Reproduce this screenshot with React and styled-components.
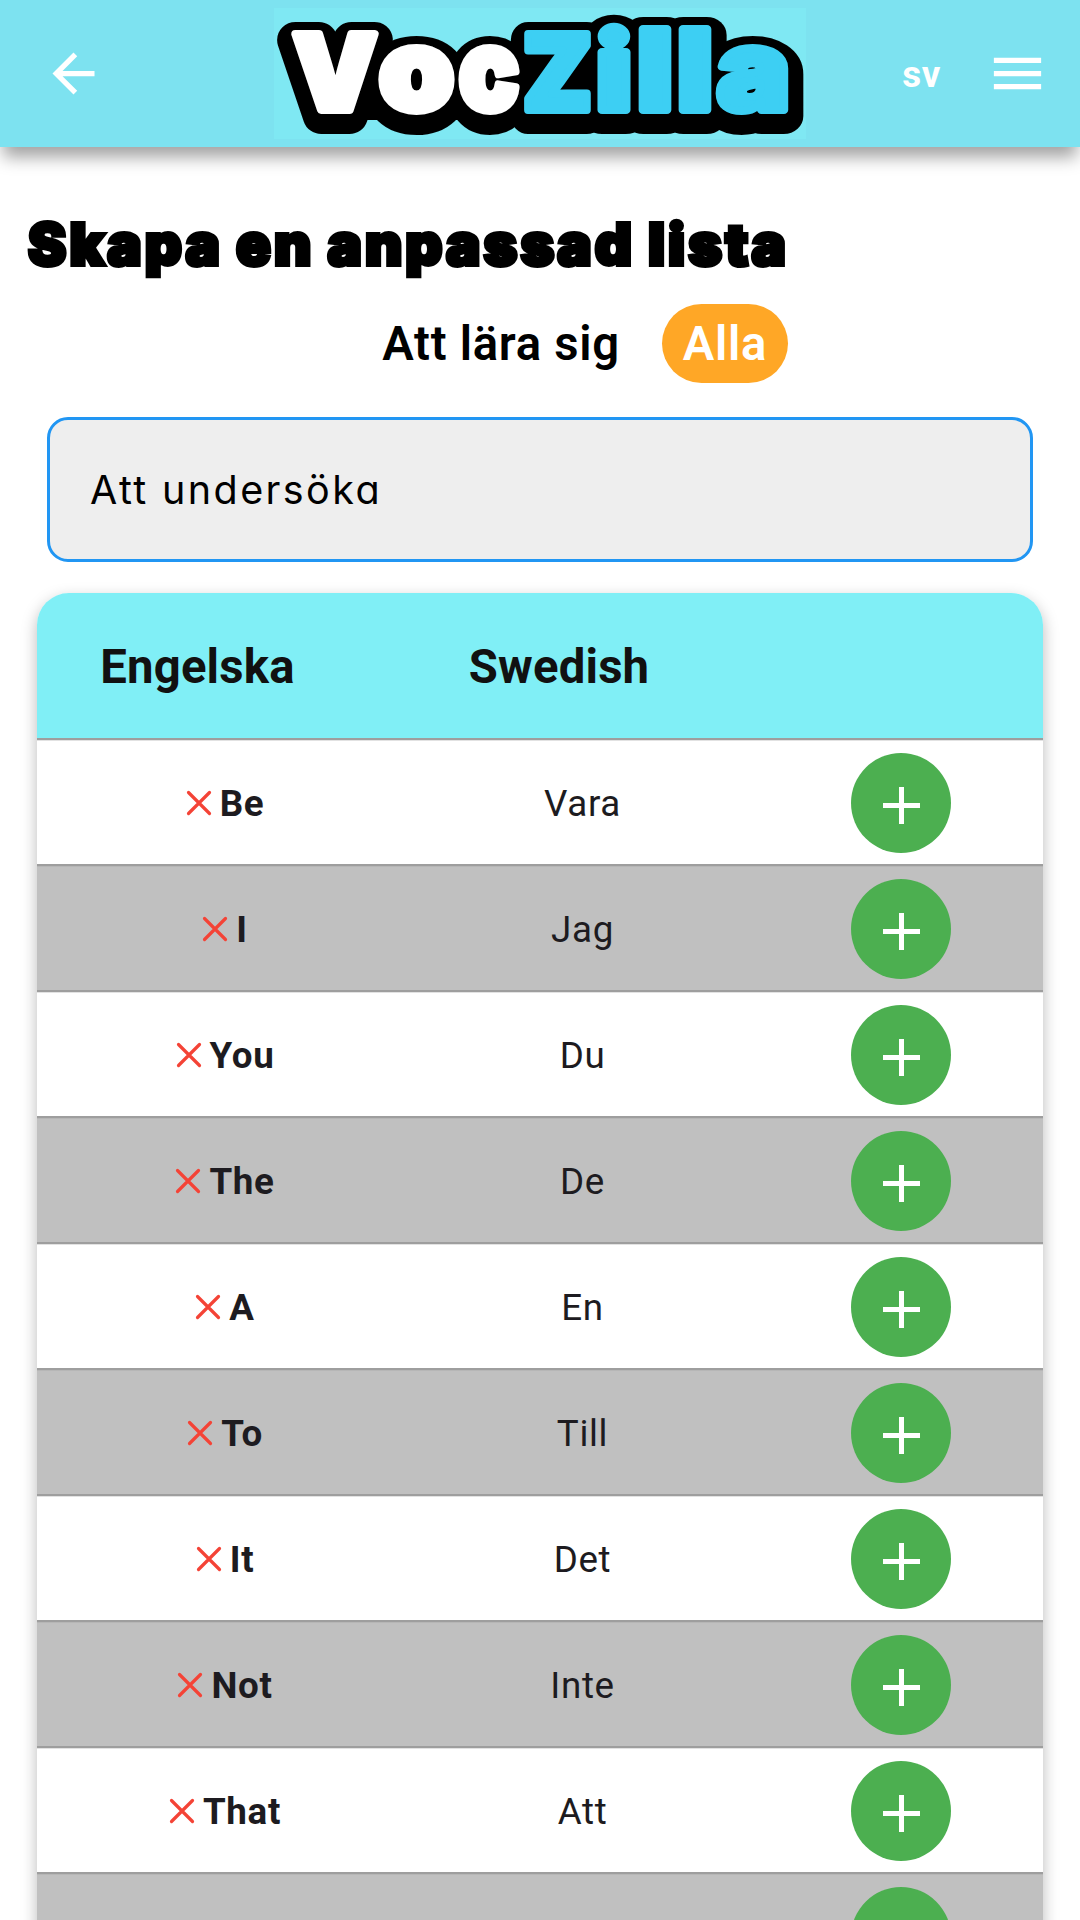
import React from "react";
import styled, { createGlobalStyle } from "styled-components";

const GlobalStyle = createGlobalStyle`
  *, *::before, *::after { box-sizing: border-box; }
  html, body { margin: 0; background: #fff; }
  body { height: 1920px; overflow: hidden; }
`;

const Screen = styled.div`
  height: 1920px;
  overflow: hidden;
  display: flex;
  flex-direction: column;
  background: #fff;
  font-family: Roboto, "Liberation Sans", sans-serif;
`;

const AppBar = styled.header`
  flex: none;
  height: 147px;
  display: grid;
  grid-template-columns: 274px 532px 1fr;
  align-items: center;
  background: #7de2f0;
  box-shadow: 0 13px 16px -3px rgba(0, 0, 0, 0.37);
`;

const BackButton = styled.button`
  width: 63px;
  height: 63px;
  margin-left: 42px;
  padding: 0;
  border: 0;
  background: none;
  color: #fff;
`;

const LogoBox = styled.div`
  display: flex;
  align-items: center;
  height: 131px;
  background: #7fe8f3;
`;

const LogoArt = styled.svg`
  flex: none;
  display: block;
  overflow: visible;
  font-family: Inter, "Open Sans", sans-serif;
  font-weight: 900;
  stroke-linejoin: round;
`;

const Letter = styled.text`
  fill: var(--ink, ${(p) => p.$color});
  stroke: var(--ink, ${(p) => p.$color});
  stroke-width: var(--weight, 8px);
`;

const LogoOutline = styled.use`
  --ink: #000;
  --weight: 36px;
`;

const Actions = styled.div`
  display: flex;
  align-items: center;
  justify-content: flex-end;
  padding-right: 31px;
  gap: 45px;
`;

const Language = styled.span`
  color: #fff;
  font-size: 36.75px;
  font-weight: 700;
  line-height: 44px;
  letter-spacing: 0.6px;
  padding-top: 2px;
`;

const MenuButton = styled(BackButton)`
  margin: 0;
`;

const Icon = styled.svg`
  display: block;
  width: ${(p) => p.$size}px;
  height: ${(p) => p.$size}px;
`;

const Title = styled.h1`
  margin: 61px 0 0 28px;
  height: 72px;
  font-family: Inter, "Open Sans", sans-serif;
  font-size: 57.5px;
  font-weight: 900;
  line-height: 72px;
  letter-spacing: 3.1px;
  word-spacing: -1.5px;
  white-space: nowrap;
  color: #000;
  -webkit-text-stroke: 4px #000;
  stroke-linejoin: round;
  paint-order: stroke;
`;

const Filters = styled.div`
  display: flex;
  justify-content: flex-end;
  align-items: center;
  width: 788px;
  height: 79px;
  margin-top: 24px;
  gap: 42px;
`;

const Filter = styled.button`
  height: 79px;
  padding: 2px ${(p) => (p.$active ? "21px" : "0")} 0;
  border: 0;
  border-radius: 40px;
  background: ${(p) => (p.$active ? "#ffa726" : "transparent")};
  color: ${(p) => (p.$active ? "#fff" : "#000")};
  font: 600 47.25px/77px Roboto, "Liberation Sans", sans-serif;
  letter-spacing: 0.7px;
`;

const SearchField = styled.div`
  flex: none;
  height: 145px;
  margin: 34px 47px 0;
  padding: 0 40px;
  display: flex;
  align-items: center;
  border: 3px solid #2196f3;
  border-radius: 21px;
  background: #eee;
  color: #000;
  font-family: Inter, Lato, sans-serif;
  font-feature-settings: "cv11";
  font-size: 39.5px;
  font-weight: 400;
  letter-spacing: 2.4px;
`;

const Table = styled.section`
  flex: none;
  width: 1006px;
  margin: 31px 0 0 37px;
  border-radius: 32px 32px 0 0;
  box-shadow: 0 6px 16px rgba(0, 0, 0, 0.28);
`;

const columns = "374px 342px 290px";

const HeadRow = styled.div`
  display: grid;
  grid-template-columns: ${columns};
  align-items: center;
  height: 145px;
  border-radius: 32px 32px 0 0;
  background: #80eff6;
`;

const HeadCell = styled.div`
  padding-top: 2px;
  padding-right: ${(p) => p.$shift}px;
  text-align: center;
  font-size: 47.25px;
  font-weight: 700;
  letter-spacing: 0.2px;
  color: #111;
`;

const Row = styled.div`
  display: grid;
  grid-template-columns: ${columns};
  align-items: center;
  height: 126px;
  border-top: 2px solid #9e9e9e;
  box-shadow: inset 0 1px rgba(158, 158, 158, 0.3);
  background: ${(p) => (p.$shaded ? "#c0c0c0" : "#fff")};
`;

const Word = styled.div`
  display: flex;
  align-items: center;
  justify-content: center;
  gap: 8px;
  padding: 3px 0 0 ${(p) => (p.$bold ? 2 : 1)}px;
  font-size: 36.75px;
  font-weight: ${(p) => (p.$bold ? 700 : 400)};
  line-height: 48px;
  letter-spacing: 0.66px;
  color: #1d1b20;
`;

const Cross = styled.svg`
  display: block;
  width: 26px;
  height: 26px;
  margin-bottom: 2px;
`;

const AddCell = styled.div`
  display: flex;
  justify-content: center;
  padding: 2px 0 0 6.5px;
`;

const AddButton = styled.button`
  width: 100px;
  height: 100px;
  padding: 5px 0 0;
  display: grid;
  place-items: center;
  border: 0;
  border-radius: 50%;
  background: #4caf50;
`;

const letters = [
  { ch: "V", x: 293, w: 84, size: 104 },
  { ch: "o", x: 379, w: 75, size: 113 },
  { ch: "c", x: 459, w: 60, size: 113 },
  { ch: "Z", x: 523, w: 69, size: 104, blue: true },
  { ch: "i", x: 596, w: 36, size: 107, blue: true },
  { ch: "l", x: 637, w: 36, size: 111, blue: true },
  { ch: "l", x: 677, w: 36, size: 111, blue: true },
  { ch: "a", x: 717, w: 73, size: 113, blue: true },
];

function Logo() {
  return (
    <LogoArt width="532" height="147" viewBox="0 -8 532 147" role="img" aria-label="VocZilla">
      <path d="M45 60H500V112H45z" />
      <LogoOutline href="#logo-letters" y="6" />
      <g id="logo-letters">
        {letters.map((l, i) => (
          <Letter
            key={i}
            x={l.x - 274}
            y={102}
            fontSize={l.size}
            textLength={l.w}
            lengthAdjust="spacingAndGlyphs"
            $color={l.blue ? "#3dcff3" : "#fff"}
          >
            {l.ch}
          </Letter>
        ))}
      </g>
    </LogoArt>
  );
}

const words = [
  ["Be", "Vara"],
  ["I", "Jag"],
  ["You", "Du"],
  ["The", "De"],
  ["A", "En"],
  ["To", "Till"],
  ["It", "Det"],
  ["Not", "Inte"],
  ["That", "Att"],
  ["", ""],
];

export default function App() {
  return (
    <Screen>
      <GlobalStyle />
      <AppBar>
        <BackButton aria-label="Tillbaka">
          <Icon $size={63} viewBox="0 0 24 24" fill="currentColor">
            <path d="M20 11H7.83l5.59-5.59L12 4l-8 8 8 8 1.41-1.41L7.83 13H20v-2z" />
          </Icon>
        </BackButton>
        <LogoBox>
          <Logo />
        </LogoBox>
        <Actions>
          <Language>sv</Language>
          <MenuButton aria-label="Meny">
            <Icon $size={63} viewBox="0 0 24 24" fill="currentColor">
              <path d="M3 18h18v-2H3v2zm0-5h18v-2H3v2zm0-7v2h18V6H3z" />
            </Icon>
          </MenuButton>
        </Actions>
      </AppBar>
      <Title>Skapa en anpassad lista</Title>
      <Filters>
        <Filter>Att lära sig</Filter>
        <Filter $active>Alla</Filter>
      </Filters>
      <SearchField>Att undersöka</SearchField>
      <Table>
        <HeadRow>
          <HeadCell $shift={53}>Engelska</HeadCell>
          <HeadCell $shift={46}>Swedish</HeadCell>
        </HeadRow>
        {words.map(([en, sv], i) => (
          <Row key={i} $shaded={i % 2 === 1}>
            <Word $bold>
              {en && (
                <Cross viewBox="0 0 26 26" fill="none" stroke="#f44336" strokeWidth="3.2" strokeLinecap="round">
                  <path d="M2.5 2.5l21 21M23.5 2.5l-21 21" />
                </Cross>
              )}
              {en}
            </Word>
            <Word>{sv}</Word>
            <AddCell>
              <AddButton aria-label="Lägg till">
                <Icon $size={37} viewBox="0 0 37 37" stroke="#fff" strokeWidth="5">
                  <path d="M18.5 0v37M0 18.5h37" />
                </Icon>
              </AddButton>
            </AddCell>
          </Row>
        ))}
      </Table>
    </Screen>
  );
}
